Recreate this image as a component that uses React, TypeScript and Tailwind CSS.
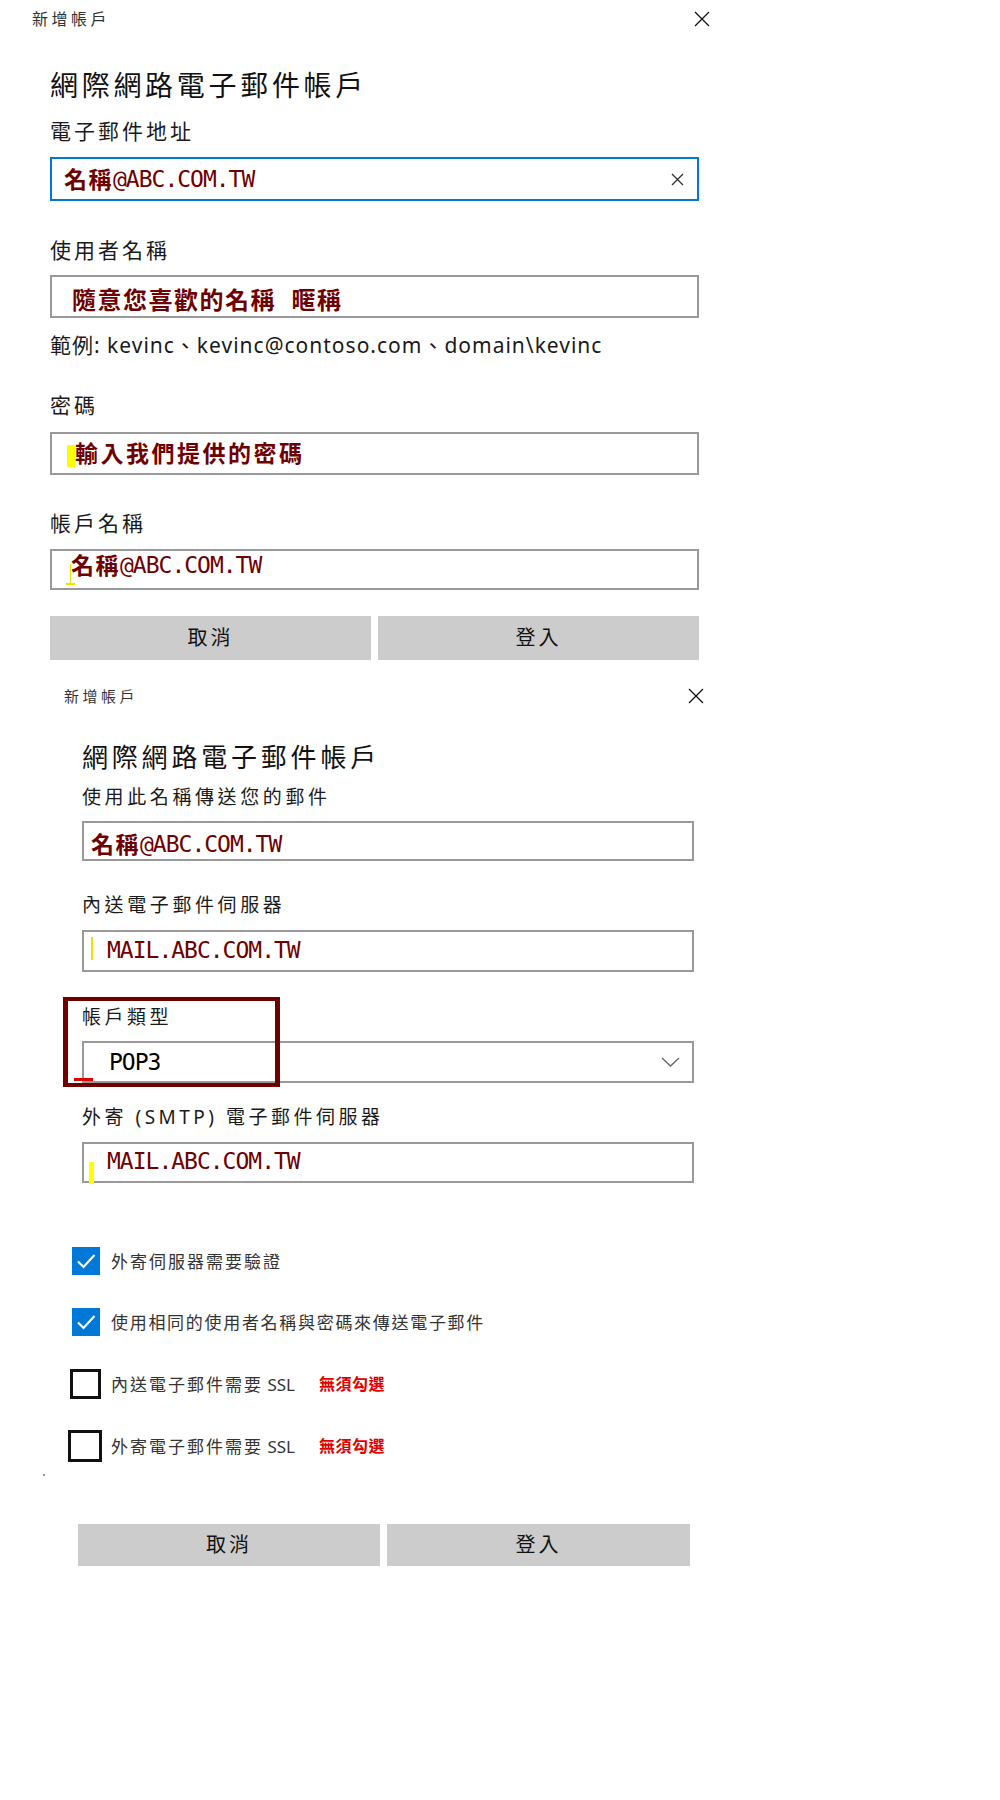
import React from "react";

const CJK = "font-['Noto_Sans','Noto_Sans_CJK_TC',sans-serif]";
const MONO = "font-['DejaVu_Sans_Mono','Noto_Sans_CJK_TC',monospace]";

function CloseIcon() {
  return (
    <svg width="16" height="16" viewBox="0 0 16 16" className="shrink-0">
      <path d="M1 1L15 15M15 1L1 15" stroke="#111" strokeWidth="1.3" fill="none" />
    </svg>
  );
}

function ClearIcon() {
  return (
    <svg width="13" height="13" viewBox="0 0 13 13" className="shrink-0">
      <path d="M1 1L12 12M12 1L1 12" stroke="#333" strokeWidth="1.4" fill="none" />
    </svg>
  );
}

function Chevron() {
  return (
    <svg width="19" height="10" viewBox="0 0 19 10" className="shrink-0">
      <path d="M1 1L9.5 9L18 1" stroke="#666" strokeWidth="1.3" fill="none" />
    </svg>
  );
}

function Check() {
  return (
    <div className="w-[28px] h-[28px] bg-[#0078d7] flex items-center justify-center shrink-0">
      <svg width="22" height="22" viewBox="0 0 22 22">
        <path d="M3 11.5L8.5 17L19.5 5" stroke="#fff" strokeWidth="2.2" fill="none" />
      </svg>
    </div>
  );
}

function MaroonCJK({ children }: { children: React.ReactNode }) {
  return (
    <span className={`${CJK} text-[23px] leading-none font-bold text-[#6e0000] tracking-[1.5px]`}>{children}</span>
  );
}

function MaroonMono({ children }: { children: React.ReactNode }) {
  return <span className={`${MONO} text-[23px] leading-none text-[#6e0000] tracking-[-1px]`}>{children}</span>;
}

function Label({ children, cls }: { children: React.ReactNode; cls: string }) {
  return <div className={`${CJK} leading-none text-[#1a1a1a] whitespace-nowrap ${cls}`}>{children}</div>;
}

function Button({ children, cls }: { children: React.ReactNode; cls: string }) {
  return (
    <div
      className={`${CJK} bg-[#cccccc] flex items-center justify-center text-[20px] tracking-[3px] text-[#111] ${cls}`}
    >
      {children}
    </div>
  );
}

export default function App() {
  return (
    <div className="w-[1000px] min-h-[1800px] bg-white">
      {/* Dialog 1 */}
      <div className="w-[720px]">
        <div className="h-[38px] flex items-center justify-between pl-[32px] pr-[10px]">
          <span className={`${CJK} text-[16px] leading-none tracking-[3.5px] text-[#333]`}>新增帳戶</span>
          <CloseIcon />
        </div>
        <div className="pl-[50px]">
          <div className={`${CJK} mt-[33px] text-[28px] leading-none tracking-[3.7px] text-[#111] h-[28px]`}>
            網際網路電子郵件帳戶
          </div>
          <Label cls="mt-[22px] text-[21px] h-[21px] tracking-[3px]">電子郵件地址</Label>
          <div className="mt-[15px] h-[44px] w-[649px] border-2 border-[#0078d7] flex items-center justify-between pl-[12px] pr-[13px]">
            <div className="flex items-center">
              <MaroonCJK>名稱</MaroonCJK>
              <MaroonMono>@ABC.COM.TW</MaroonMono>
            </div>
            <ClearIcon />
          </div>
          <Label cls="mt-[39px] text-[21px] h-[21px] tracking-[3px]">使用者名稱</Label>
          <div className="mt-[14px] h-[43px] w-[649px] border-2 border-[#999] flex items-center pl-[20px] pt-[6px]">
            <span className={`${CJK} text-[24px] leading-none font-bold text-[#6e0000] tracking-[1.5px]`}>
              隨意您喜歡的名稱&nbsp;&nbsp;暱稱
            </span>
          </div>
          <div className={`${CJK} mt-[17px] h-[21px] text-[21px] leading-none tracking-[1px] text-[#1a1a1a] whitespace-nowrap`}>
            範例: kevinc、kevinc@contoso.com、domain\kevinc
          </div>
          <Label cls="mt-[39px] text-[21px] h-[21px] tracking-[3px]">密碼</Label>
          <div className="mt-[16px] h-[43px] w-[649px] border-2 border-[#999] flex items-center pl-[15px]">
            <div className="w-[8px] h-[22px] bg-[#ffff00] mt-[4px] shrink-0" />
            <span className={`${CJK} text-[23px] leading-none font-bold text-[#6e0000] tracking-[2.5px]`}>
              輸入我們提供的密碼
            </span>
          </div>
          <Label cls="mt-[38px] text-[21px] h-[21px] tracking-[3px]">帳戶名稱</Label>
          <div className="mt-[15px] h-[41px] w-[649px] border-2 border-[#999] flex items-start pl-[14px] pt-[3px]">
            <div className="flex flex-col items-center mt-[10px] w-[9px]">
              <div className="w-[1px] h-[19px] bg-[#f0e000]" />
              <div className="w-[9px] h-[2px] bg-[#f0e000]" />
            </div>
            <div className="-ml-[4px] flex items-center">
              <MaroonCJK>名稱</MaroonCJK>
              <MaroonMono>@ABC.COM.TW</MaroonMono>
            </div>
          </div>
          <div className="mt-[26px] flex gap-[7px] w-[649px]">
            <Button cls="w-[321px] h-[44px]">取消</Button>
            <Button cls="w-[321px] h-[44px]">登入</Button>
          </div>
        </div>
      </div>

      {/* Dialog 2 */}
      <div className="w-[720px] relative pt-[16px]">
        <div className="h-[40px] flex items-center justify-between pl-[64px] pr-[16px]">
          <span className={`${CJK} text-[15px] leading-none tracking-[3.5px] text-[#333]`}>新增帳戶</span>
          <CloseIcon />
        </div>
        <div className="pl-[82px]">
          <div className={`${CJK} mt-[28px] text-[26px] leading-none tracking-[3.8px] text-[#111] h-[26px]`}>
            網際網路電子郵件帳戶
          </div>
          <Label cls="mt-[18px] text-[19px] h-[19px] tracking-[3.6px]">使用此名稱傳送您的郵件</Label>
          <div className="mt-[14px] h-[40px] w-[612px] border-2 border-[#999] flex items-center pl-[7px] pt-[6px]">
            <MaroonCJK>名稱</MaroonCJK>
            <MaroonMono>@ABC.COM.TW</MaroonMono>
          </div>
          <Label cls="mt-[35px] text-[19px] h-[19px] tracking-[3.6px]">內送電子郵件伺服器</Label>
          <div className="mt-[15px] h-[42px] w-[612px] border-2 border-[#999] flex items-center pl-[7px]">
            <div className="w-[2px] h-[23px] bg-[#f0e000] -mt-[6px]" />
            <span className="ml-[14px]">
              <MaroonMono>MAIL.ABC.COM.TW</MaroonMono>
            </span>
          </div>
          <Label cls="mt-[36px] text-[19px] h-[19px] tracking-[3.5px]">帳戶類型</Label>
          <div className="mt-[14px] h-[42px] w-[612px] border-2 border-[#999] flex items-center justify-between pl-[25px] pr-[12px]">
            <span className={`${MONO} text-[23px] leading-none text-black tracking-[-1px]`}>POP3</span>
            <Chevron />
          </div>
          <Label cls="mt-[25px] text-[19px] h-[19px] tracking-[3.5px]">外寄 (SMTP) 電子郵件伺服器</Label>
          <div className="mt-[15px] h-[41px] w-[612px] border-2 border-[#999] flex items-center pl-[5px]">
            <div className="w-[5px] h-[22px] bg-[#ffff00] mt-[20px]" />
            <span className="ml-[13px]">
              <MaroonMono>MAIL.ABC.COM.TW</MaroonMono>
            </span>
          </div>
        </div>

        <div className="mt-[63px] h-[30px] flex items-center pl-[72px]">
          <Check />
          <span className={`${CJK} ml-[11px] text-[17px] leading-none tracking-[2px] text-[#333]`}>外寄伺服器需要驗證</span>
        </div>
        <div className="mt-[31px] h-[30px] flex items-center pl-[72px]">
          <Check />
          <span className={`${CJK} ml-[11px] text-[17px] leading-none tracking-[1.7px] text-[#333]`}>
            使用相同的使用者名稱與密碼來傳送電子郵件
          </span>
        </div>
        <div className="mt-[32px] h-[30px] flex items-center pl-[70px]">
          <div className="w-[31px] h-[30px] border-[3px] border-[#111] shrink-0" />
          <span className={`${CJK} ml-[10px] text-[17px] leading-none text-[#333] whitespace-nowrap`}>
            <span className="tracking-[2px]">內送電子郵件需要</span> SSL
          </span>
          <span className={`${CJK} ml-[24px] text-[16px] leading-none font-bold tracking-[0.5px] text-[#e00000]`}>無須勾選</span>
        </div>
        <div className="mt-[31px] h-[32px] flex items-center pl-[68px]">
          <div className="w-[34px] h-[32px] border-[3px] border-[#111] shrink-0" />
          <span className={`${CJK} ml-[9px] text-[17px] leading-none text-[#333] whitespace-nowrap`}>
            <span className="tracking-[2px]">外寄電子郵件需要</span> SSL
          </span>
          <span className={`${CJK} ml-[24px] text-[16px] leading-none font-bold tracking-[0.5px] text-[#e00000]`}>無須勾選</span>
        </div>
        <div className="mt-[12px] ml-[43px] w-[2px] h-[2px] bg-[#8899aa]" />
        <div className="mt-[48px] ml-[78px] flex gap-[7px] w-[612px]">
          <Button cls="w-[302px] h-[42px]">取消</Button>
          <Button cls="w-[303px] h-[42px]">登入</Button>
        </div>

        {/* annotation box */}
        <div className="absolute left-[63px] top-[337px] w-[217px] h-[90px] border-x-[5px] border-y-[4px] border-[#6e0000] pointer-events-none" />
        <div className="absolute left-[74px] top-[418px] w-[19px] h-[3px] bg-[#e00000]" />
      </div>
    </div>
  );
}
